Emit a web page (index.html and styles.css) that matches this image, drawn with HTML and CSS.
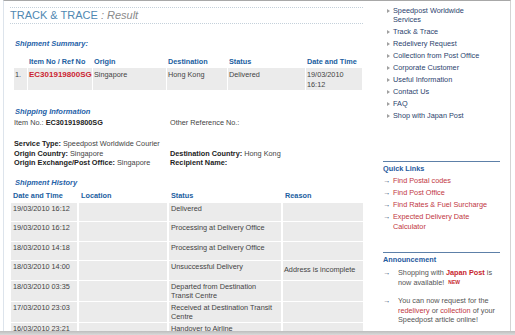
FILE: index.html
```html
<!DOCTYPE html>
<html lang="en">
<head>
    <meta charset="UTF-8">
    <title>Track &amp; Trace : Result</title>
    <link rel="stylesheet" href="styles.css">
</head>
<body>

    <div class="frame">
        <div class="main">
            <h1 class="page-title">TRACK &amp; TRACE <span class="sub">: Result</span></h1>

            <h2 class="section">Shipment Summary:</h2>
            <table class="summary">
                <colgroup>
                    <col style="width:13px"><col style="width:64px"><col style="width:73px">
                    <col style="width:60px"><col style="width:77px"><col style="width:56px">
                </colgroup>
                <tr>
                    <th></th>
                    <th>Item No / Ref No</th>
                    <th>Origin</th>
                    <th>Destination</th>
                    <th>Status</th>
                    <th>Date and Time</th>
                </tr>
                <tr class="row">
                    <td>1.</td>
                    <td class="item-no">EC301919800SG</td>
                    <td>Singapore</td>
                    <td>Hong Kong</td>
                    <td>Delivered</td>
                    <td>19/03/2010<br>16:12</td>
                </tr>
            </table>

            <h2 class="section info-title">Shipping Information</h2>
            <div class="info">
                <div>Item No.: <b>EC301919800SG</b></div>
                <div>Other Reference No.:</div>
            </div>
            <div class="info details">
                <div><b>Service Type:</b> Speedpost Worldwide Courier</div>
                <div></div>
                <div><b>Origin Country:</b> Singapore</div>
                <div><b>Destination Country:</b> Hong Kong</div>
                <div><b>Origin Exchange/Post Office:</b> Singapore</div>
                <div><b>Recipient Name:</b></div>
            </div>

            <h2 class="section history-title">Shipment History</h2>
            <table class="history">
                <colgroup>
                    <col style="width:66px"><col style="width:88px"><col style="width:112px"><col style="width:80px">
                </colgroup>
                <tr>
                    <th>Date and Time</th>
                    <th>Location</th>
                    <th>Status</th>
                    <th>Reason</th>
                </tr>
                <tr><td>19/03/2010 16:12</td><td></td><td>Delivered</td><td></td></tr>
                <tr><td>19/03/2010 16:12</td><td></td><td>Processing at Delivery Office</td><td></td></tr>
                <tr><td>18/03/2010 14:18</td><td></td><td>Processing at Delivery Office</td><td></td></tr>
                <tr><td>18/03/2010 14:00</td><td></td><td>Unsuccessful Delivery</td><td class="reason">Address is incomplete</td></tr>
                <tr><td>18/03/2010 03:35</td><td></td><td>Departed from Destination Transit Centre</td><td></td></tr>
                <tr><td>17/03/2010 23:03</td><td></td><td>Received at Destination Transit Centre</td><td></td></tr>
                <tr><td>16/03/2010 23:21</td><td></td><td>Handover to Airline</td><td></td></tr>
            </table>
        </div>

        <div class="side">
            <ul class="menu">
                <li><a href="#">Speedpost Worldwide Services</a></li>
                <li><a href="#">Track &amp; Trace</a></li>
                <li><a href="#">Redelivery Request</a></li>
                <li><a href="#">Collection from Post Office</a></li>
                <li><a href="#">Corporate Customer</a></li>
                <li><a href="#">Useful Information</a></li>
                <li><a href="#">Contact Us</a></li>
                <li><a href="#">FAQ</a></li>
                <li><a href="#">Shop with Japan Post</a></li>
            </ul>

            <div class="box quick">
                <h3>Quick Links</h3>
                <ul class="links">
                    <li><a href="#">Find Postal codes</a></li>
                    <li><a href="#">Find Post Office</a></li>
                    <li><a href="#">Find Rates &amp; Fuel Surcharge</a></li>
                    <li><a href="#">Expected Delivery Date Calculator</a></li>
                </ul>
            </div>

            <div class="box news">
                <h3>Announcement</h3>
                <ul class="links">
                    <li>Shopping with <a href="#" class="strong">Japan Post</a> is now available! <span class="new">NEW</span></li>
                    <li>You can now request for the <a href="#">redelivery</a> or <a href="#">collection</a> of your Speedpost article online!</li>
                </ul>
            </div>
        </div>
    </div>
    <div class="bottom-bar"></div>

</body>
</html>
```
FILE: styles.css
```css
body {
    margin: 0;
    font-family: "Liberation Sans", Arial, sans-serif;
    font-size: 7.3px;
    color: #444;
    background-color: #fff;
    overflow: hidden;
}

.frame {
    display: grid;
    grid-template-columns: 359px 117px;
    column-gap: 20px;
    margin-left: 3px;
    width: 506px;
    height: 330px;
    overflow: hidden;
    border-top: 1px solid #a8a8a8;
    border-left: 1px solid #dde4ec;
    border-right: 1px solid #d4d4d4;
}

.bottom-bar {
    height: 5px;
    background: linear-gradient(#bdbdbd, #e2e2e2);
}

/* main column */
.main {
    padding-left: 6px;
}

.page-title {
    margin: 6px 0 0;
    font-size: 11px;
    font-weight: normal;
    line-height: 15px;
    color: #4f88b2;
    border-top: 1px dotted #c4d0da;
    border-bottom: 1px dotted #c4d0da;
}

.page-title .sub {
    color: #8a8a8a;
    font-style: italic;
}

.section {
    margin: 15px 0 0 5px;
    font-size: 7.5px;
    line-height: 10px;
    font-style: italic;
    font-weight: bold;
    color: #1f62a8;
}

table {
    border-collapse: separate;
    table-layout: fixed;
    font-size: 7.3px;
}

th {
    text-align: left;
    color: #21609f;
    font-weight: bold;
}

.summary {
    width: 350px;
    margin: 7px 0 0 3px;
    border-spacing: 1px;
}

.summary th {
    padding: 0 1px;
    line-height: 10px;
}

.summary .row td {
    background-color: #ebebeb;
    padding: 2px 1px 1px;
    line-height: 9.5px;
    vertical-align: top;
}

.summary .item-no {
    color: #cc2431;
    font-weight: bold;
    font-size: 8px;
}

.info-title {
    margin-top: 16px;
}

.info {
    display: grid;
    grid-template-columns: 156px 1fr;
    margin: 1px 0 0 4px;
    line-height: 10px;
    color: #444;
}

.info b {
    color: #222;
}

.details {
    margin-top: 11px;
    line-height: 9.5px;
}

.history-title {
    margin-top: 10px;
}

.history {
    width: 356px;
    margin: 1px 0 0 -1px;
    border-spacing: 2px 1px;
}

.history th {
    height: 12px;
    padding: 0 2px;
    vertical-align: middle;
}

.history td {
    height: 17.5px;
    padding: 1px 2px 0;
    line-height: 9.6px;
    vertical-align: top;
    background-color: #ebebeb;
}

.history td.reason {
    vertical-align: middle;
    padding: 0 1px;
}

/* right column */
.side {
    padding-top: 5px;
}

.side ul {
    list-style: none;
    margin: 0;
    padding: 0;
}

.side a {
    text-decoration: none;
}

.menu li {
    position: relative;
    width: 92px;
    margin: 0 0 3px 10px;
    line-height: 9px;
}

.menu li::before {
    content: "";
    position: absolute;
    left: -6px;
    top: 3px;
    border-left: 3px solid #a0a0a0;
    border-top: 2px solid transparent;
    border-bottom: 2px solid transparent;
}

.menu a {
    color: #2b3f6e;
}

.box {
    border-top: 1px solid #5d80a8;
}

.quick {
    margin-top: 41px;
}

.box h3 {
    margin: 2px 0 0;
    font-size: 7.3px;
    line-height: 10px;
    color: #1f5a9e;
}

.links li {
    position: relative;
    padding-left: 10px;
    margin-top: 2px;
    line-height: 10px;
}

.links li::before {
    content: "\2192";
    position: absolute;
    left: 0;
    top: 0;
    color: #243a66;
    font-weight: bold;
}

.links a {
    color: #c1373f;
}

.news {
    margin-top: 20px;
}

.news .links li {
    padding-left: 15px;
    line-height: 9.6px;
    color: #555;
}

.news .links li:first-child {
    margin-top: 3px;
}

.news .links li + li {
    margin-top: 9px;
}

.news .strong {
    font-weight: bold;
    color: #c81f2e;
}

.new {
    font-size: 5px;
    font-weight: bold;
    color: #c81f2e;
    vertical-align: 1px;
    margin-left: 2px;
}
```
